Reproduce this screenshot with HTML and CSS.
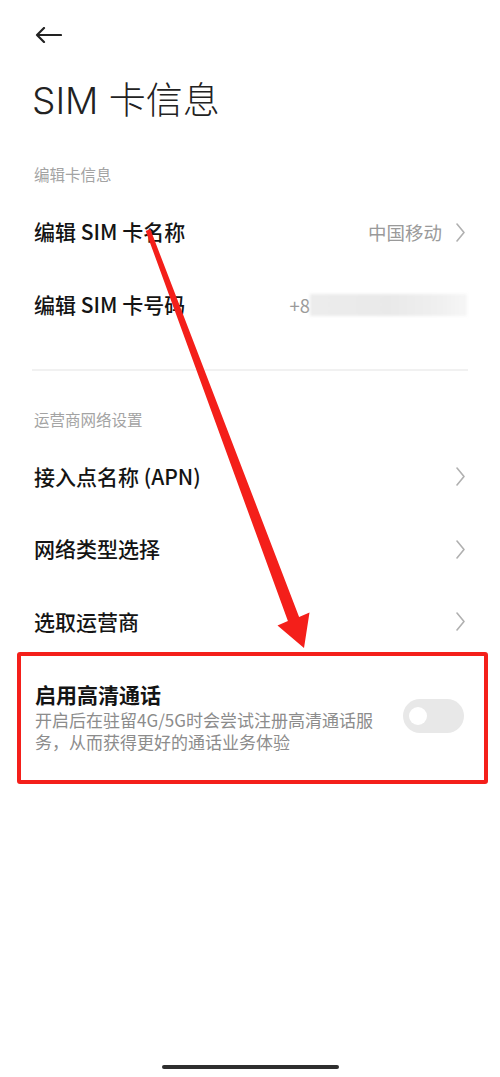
FILE: index.html
```html
<!DOCTYPE html>
<html lang="zh-CN">
<head>
<meta charset="utf-8">
<title>SIM 卡信息</title>
<link rel="stylesheet" href="styles.css">
</head>
<body>
<div class="page">
  <div class="topbar">
    <svg class="back" width="27" height="16" viewBox="0 0 27 16"><path d="M26 8H2M9 1L2 8L9 15" fill="none" stroke="#222" stroke-width="2.2" stroke-linecap="round" stroke-linejoin="round"/></svg>
  </div>
  <h1 class="title">SIM 卡信息</h1>

  <div class="section-label first">编辑卡信息</div>
  <div class="row">
    <span class="row-title">编辑 SIM 卡名称</span>
    <span class="row-right"><span class="value">中国移动</span><svg class="chev" width="9" height="19" viewBox="0 0 9 19"><path d="M1 1L8 9.5L1 18" fill="none" stroke="#b0b0b0" stroke-width="1.6" stroke-linecap="round" stroke-linejoin="round"/></svg></span>
  </div>
  <div class="row">
    <span class="row-title">编辑 SIM 卡号码</span>
    <span class="row-right phone"><span class="value">+8</span><span class="blur"></span></span>
  </div>

  <div class="divider"></div>

  <div class="section-label">运营商网络设置</div>
  <div class="row">
    <span class="row-title">接入点名称 (APN)</span>
    <span class="row-right"><svg class="chev" width="9" height="19" viewBox="0 0 9 19"><path d="M1 1L8 9.5L1 18" fill="none" stroke="#b0b0b0" stroke-width="1.6" stroke-linecap="round" stroke-linejoin="round"/></svg></span>
  </div>
  <div class="row">
    <span class="row-title">网络类型选择</span>
    <span class="row-right"><svg class="chev" width="9" height="19" viewBox="0 0 9 19"><path d="M1 1L8 9.5L1 18" fill="none" stroke="#b0b0b0" stroke-width="1.6" stroke-linecap="round" stroke-linejoin="round"/></svg></span>
  </div>
  <div class="row">
    <span class="row-title">选取运营商</span>
    <span class="row-right"><svg class="chev" width="9" height="19" viewBox="0 0 9 19"><path d="M1 1L8 9.5L1 18" fill="none" stroke="#b0b0b0" stroke-width="1.6" stroke-linecap="round" stroke-linejoin="round"/></svg></span>
  </div>

  <div class="hd-row">
    <div class="hd-text">
      <div class="hd-title">启用高清通话</div>
      <div class="hd-desc">开启后在驻留4G/5G时会尝试注册高清通话服务，从而获得更好的通话业务体验</div>
    </div>
    <div class="toggle"><span class="knob"></span></div>
  </div>

  <div class="home-bar"></div>

  <div class="highlight-box"></div>
  <svg class="annot-arrow" width="500" height="1077" viewBox="0 0 500 1077">
    <polygon points="145.7,230.9 150.3,229.1 299.1,616.9 309.5,612.5 304,648 277.5,625.5 287.9,621.1" fill="#f41f1a"/>
  </svg>
</div>
</body>
</html>
```

FILE: styles.css
```css
html, body {
  margin: 0;
  padding: 0;
  background: #ffffff;
}

.page {
  position: relative;
  width: 500px;
  min-height: 1077px;
  display: flex;
  flex-direction: column;
  font-family: "Noto Sans CJK SC", "Noto Sans", sans-serif;
  color: #151515;
  overflow: hidden;
}

.topbar {
  height: 70px;
  display: flex;
  align-items: center;
  padding-left: 35px;
}

.back {
  display: block;
}

.title {
  margin: 0;
  padding-left: 32px;
  font-family: "Inter", "Noto Sans CJK SC", sans-serif;
  font-size: 37px;
  line-height: 62px;
  font-weight: 300;
  color: #222;
}

.section-label {
  padding: 38px 34px 12px;
  font-size: 15.5px;
  line-height: 20px;
  color: #a3a3a3;
}

.section-label.first {
  padding-top: 32px;
}

.row {
  height: 72.5px;
  display: flex;
  align-items: center;
  justify-content: space-between;
  padding: 0 35px 0 34px;
}

.row-title {
  font-size: 21px;
  line-height: 28px;
  margin-top: -2px;
  font-weight: 500;
  color: #141414;
  white-space: nowrap;
}

.row-right {
  display: flex;
  align-items: center;
  gap: 14px;
}

.value {
  font-size: 18.5px;
  color: #9a9a9a;
}

.chev {
  display: block;
}

.phone {
  gap: 0;
  margin-right: -2px;
}

.blur {
  display: block;
  width: 157px;
  height: 22px;
  background: linear-gradient(90deg, #ececec 0%, #e9e9e9 50%, #efefef 80%, #f6f6f6 100%);
  filter: blur(1.5px);
}

.divider {
  margin: 28px 32px 0;
  height: 1.5px;
  background: #f1f1f1;
}

.hd-row {
  display: flex;
  align-items: center;
  justify-content: space-between;
  padding: 21.5px 36px 0 35px;
}

.hd-text {
  width: 350px;
}

.hd-title {
  font-size: 21px;
  line-height: 28px;
  font-weight: 600;
  color: #141414;
}

.hd-desc {
  margin-top: 1px;
  font-size: 17px;
  line-height: 22px;
  color: #8c8c8c;
}

.toggle {
  position: relative;
  width: 61px;
  height: 34px;
  border-radius: 17px;
  background: #e8e8e8;
  flex-shrink: 0;
}

.knob {
  position: absolute;
  left: 6px;
  top: 8px;
  width: 18px;
  height: 18px;
  border-radius: 50%;
  background: #ffffff;
}

.home-bar {
  margin: auto auto 8px;
  width: 177px;
  height: 4px;
  border-radius: 2px;
  background: #2e2e2e;
}

.highlight-box {
  position: absolute;
  left: 17px;
  top: 652px;
  width: 463px;
  height: 124px;
  border: 4px solid #f41f1a;
  border-radius: 3px;
}

.annot-arrow {
  position: absolute;
  left: 0;
  top: 0;
  pointer-events: none;
}
```
